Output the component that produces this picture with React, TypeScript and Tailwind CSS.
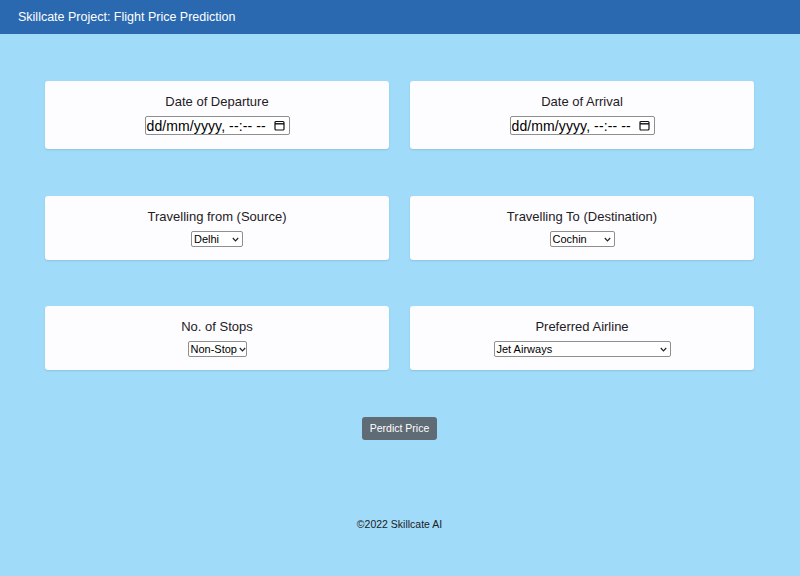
import React from 'react'

const DateBox = () => (
    <div className="mx-auto flex h-[19px] w-[145px] items-center justify-between whitespace-nowrap rounded-[2px] border border-[#8f8f8f] bg-white pl-[1px] pr-[4px] text-[14px] tracking-[0.1px] leading-none text-black">
        <span>dd/mm/yyyy, --:-- --</span>
        <svg width="11" height="11" viewBox="0 0 11 11" fill="none">
            <rect x="1" y="1.5" width="9" height="8.5" rx="1" stroke="#111" strokeWidth="1.2" />
            <line x1="1" y1="3.8" x2="10" y2="3.8" stroke="#111" strokeWidth="1.4" />
        </svg>
    </div>
)

const Select = ({ label, width }: { label: string; width: string }) => (
    <div className={`mx-auto flex h-[16px] ${width} items-center justify-between gap-[2px] whitespace-nowrap rounded-[2px] border border-[#8f8f8f] bg-white pl-[2px] pr-[3px] text-[11px] leading-none text-black`}>
        <span>{label}</span>
        <svg width="7" height="5" viewBox="0 0 7 5" fill="none" className="shrink-0">
            <path d="M0.8 1 L3.5 3.8 L6.2 1" stroke="#222" strokeWidth="1.2" />
        </svg>
    </div>
)

const Card = ({ title, children, tall }: { title: string; children: React.ReactNode; tall?: boolean }) => (
    <section className={`flex flex-col items-center rounded-[3px] bg-[#fdfcff] shadow-[0_1px_2px_rgba(0,0,0,0.12)] ${tall ? 'h-[68px] pt-[12px]' : 'h-[64px] pt-[12px]'}`}>
        <h3 className="mb-[5px] text-[13px] leading-[18px] text-[#1d2024]">{title}</h3>
        {children}
    </section>
)

export default function App() {
    return (
        <main className="min-h-[576px] bg-[#a0dcfa] font-['Liberation_Sans',Arial,sans-serif]">
            {/* Header */}
            <header className="flex h-[34px] items-center bg-[#2a69b0] px-[18px] text-[12.5px] text-white">
                Skillcate Project: Flight Price Prediction
            </header>

            <section className="px-[45px] pr-[46px] pt-[47px]">
                <section className="grid grid-cols-2 gap-x-[21px]">
                    <Card title="Date of Departure" tall>
                        <DateBox />
                    </Card>
                    <Card title="Date of Arrival" tall>
                        <DateBox />
                    </Card>
                </section>

                <section className="mt-[47px] grid grid-cols-2 gap-x-[21px]">
                    <Card title="Travelling from (Source)">
                        <Select label="Delhi" width="w-[52px]" />
                    </Card>
                    <Card title="Travelling To (Destination)">
                        <Select label="Cochin" width="w-[65px]" />
                    </Card>
                </section>

                <section className="mt-[46px] grid grid-cols-2 gap-x-[21px]">
                    <Card title="No. of Stops">
                        <Select label="Non-Stop" width="w-[59px]" />
                    </Card>
                    <Card title="Preferred Airline">
                        <Select label="Jet Airways" width="w-[177px]" />
                    </Card>
                </section>

                <section className="mt-[47px] flex justify-center">
                    <button className="h-[23px] rounded-[3px] bg-[#5f6b75] px-[8px] text-[10.5px] text-white">
                        Perdict Price
                    </button>
                </section>

                <footer className="mt-[77px] text-center text-[10.5px] text-[#1d2024]">
                    ©2022 Skillcate AI
                </footer>
            </section>
        </main>
    )
}
